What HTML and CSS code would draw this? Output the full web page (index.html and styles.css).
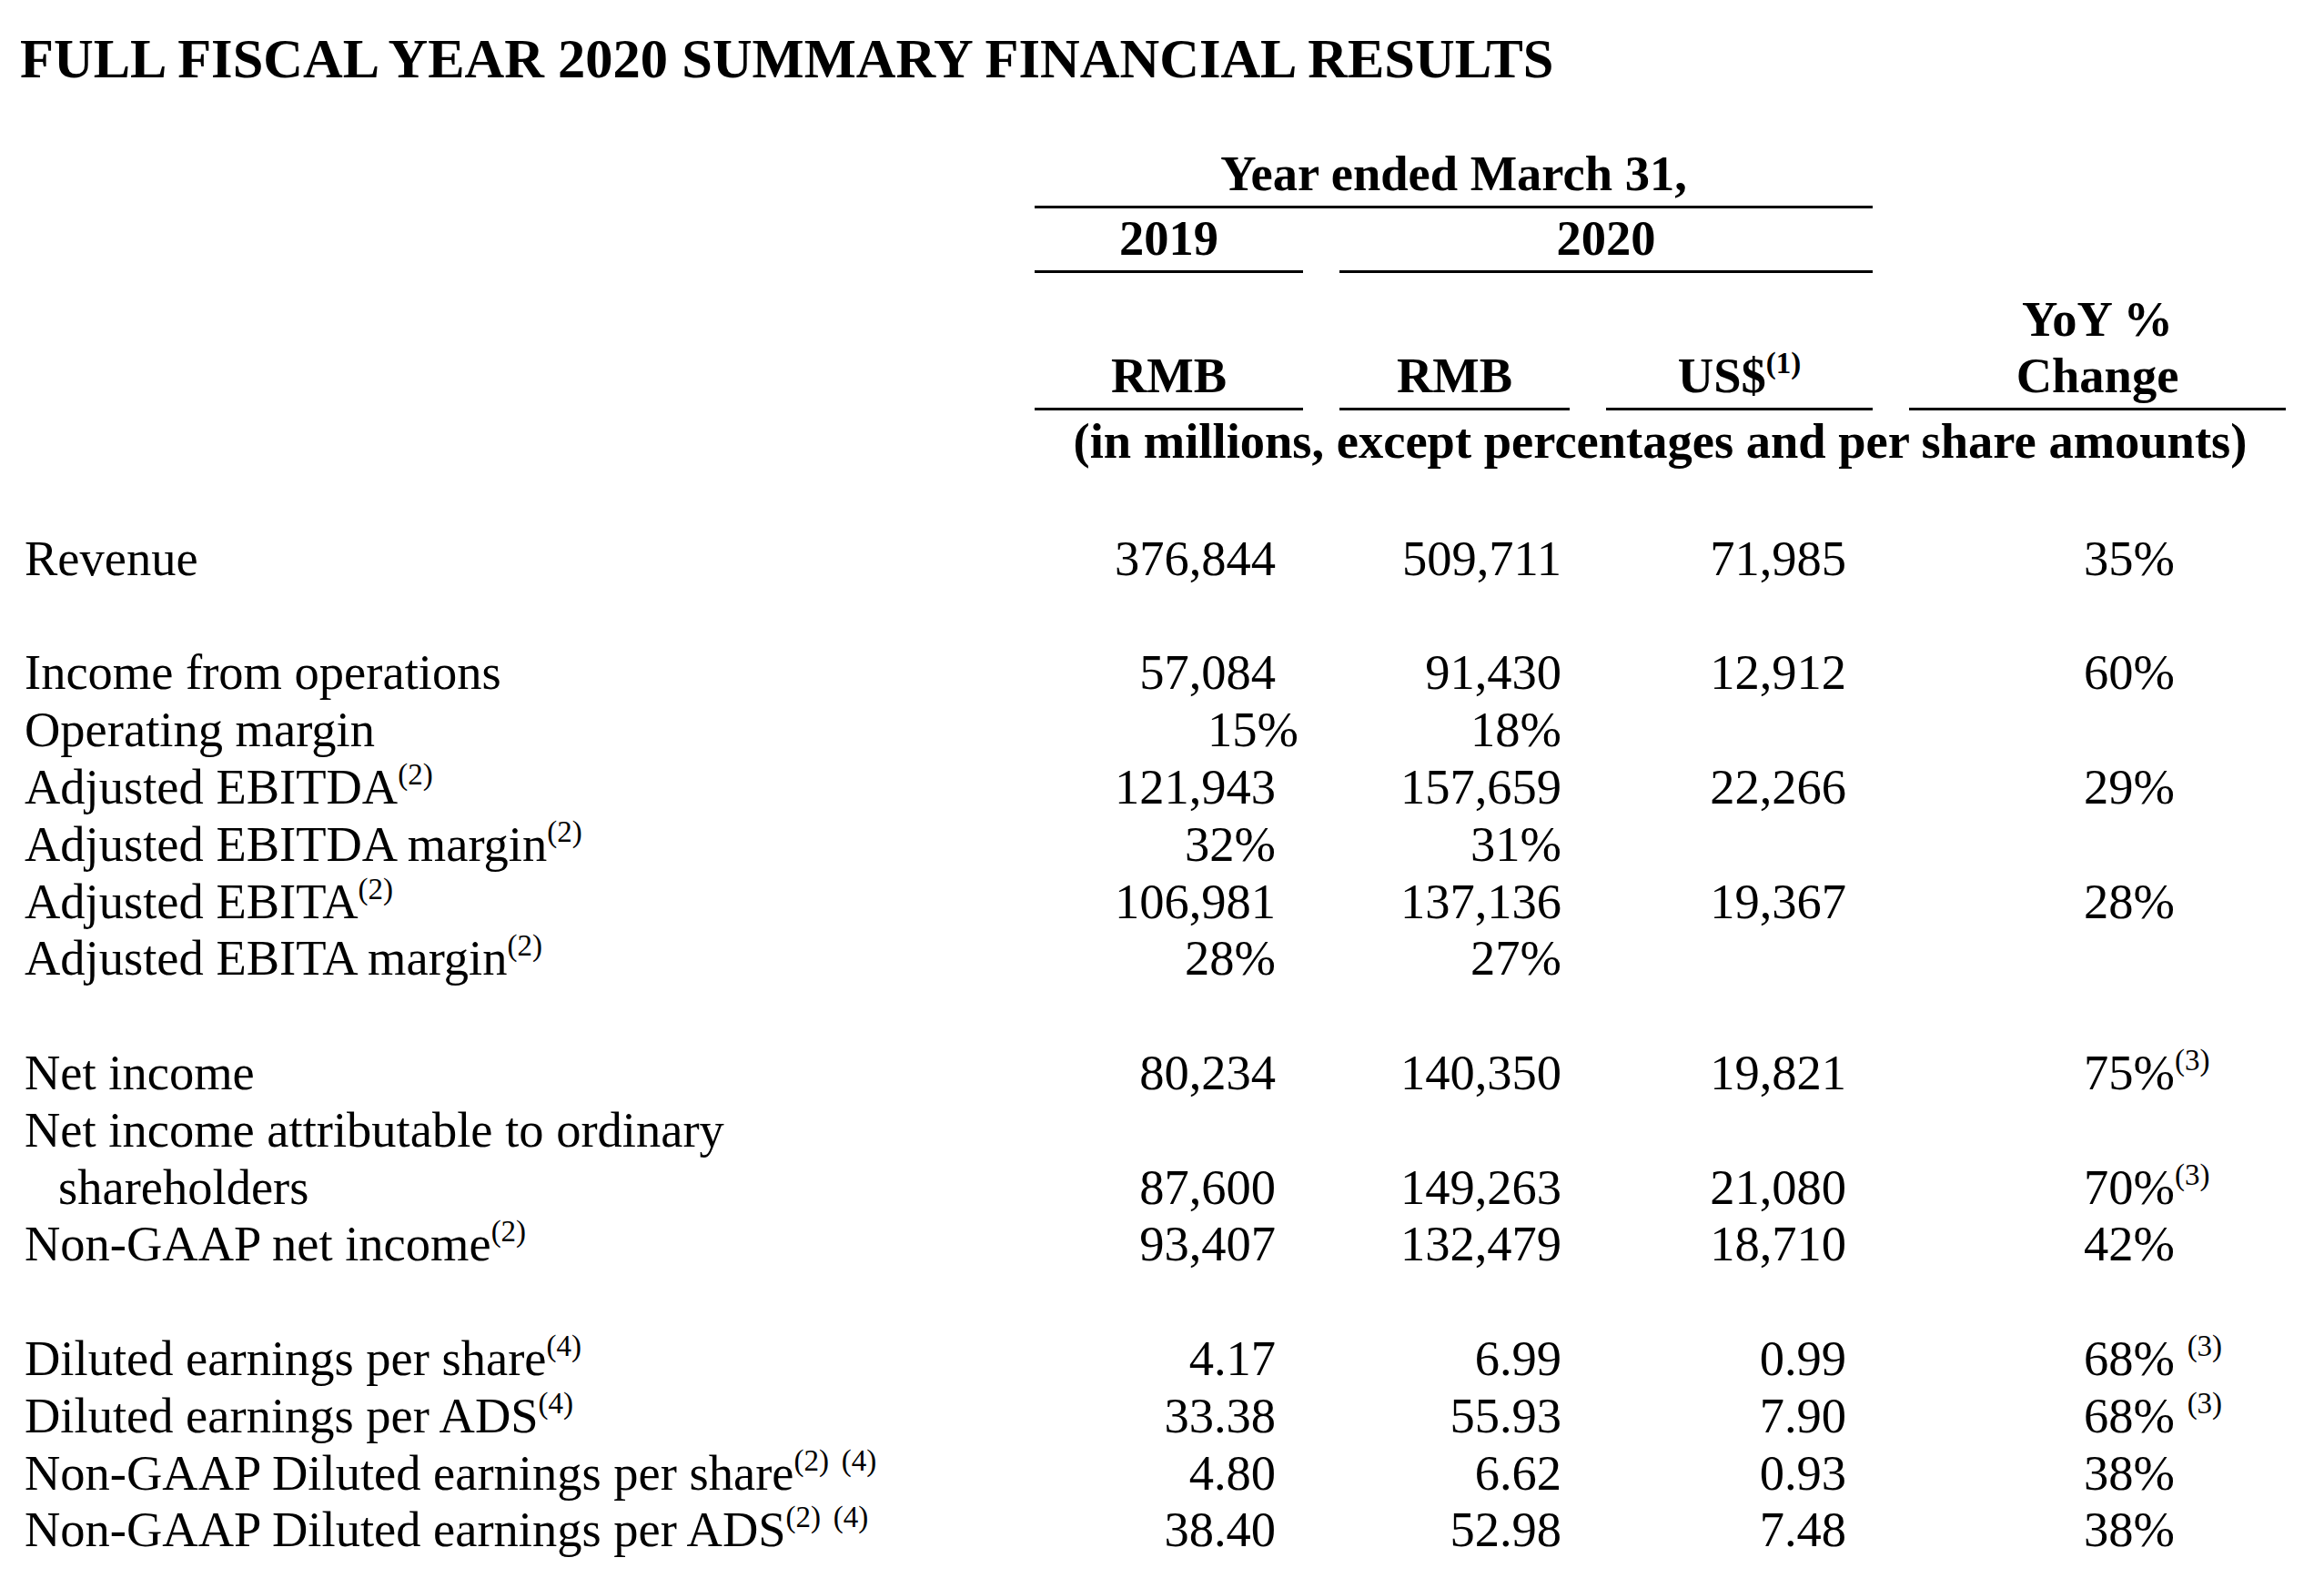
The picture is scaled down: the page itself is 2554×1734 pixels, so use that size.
FILE: index.html
```html
<!DOCTYPE html>
<html lang="en">
<head>
<meta charset="utf-8">
<title>Full Fiscal Year 2020 Summary Financial Results</title>
<link rel="stylesheet" href="styles.css">
</head>
<body>
<main class="page">
  <h1 class="title">FULL FISCAL YEAR 2020 SUMMARY FINANCIAL RESULTS</h1>

  <div class="table">
    <div class="row head head-a">
      <div class="lab"></div>
      <div class="hc span-2-5 rule">Year ended March 31,</div>
    </div>
    <div class="row head head-b">
      <div class="lab"></div>
      <div class="hc rule">2019</div>
      <div class="hc span-3-5 rule">2020</div>
    </div>
    <div class="row head head-c">
      <div class="lab"></div>
      <div class="hc rule">RMB</div>
      <div class="hc rule">RMB</div>
      <div class="hc rule">US$<span class="sup">(1)</span></div>
      <div class="hc rule">YoY %<br>Change</div>
    </div>
    <div class="row head head-d">
      <div class="lab"></div>
      <div class="hc span-2-6">(in millions, except percentages and per share amounts)</div>
    </div>

    <div class="row blank first"></div>

    <div class="row">
      <div class="lab">Revenue</div>
      <div class="c1">376,844</div><div class="c2">509,711</div><div class="c3">71,985</div>
      <div class="c4"><span class="v">35%</span><span class="n"></span></div>
    </div>

    <div class="row blank"></div>

    <div class="row">
      <div class="lab">Income from operations</div>
      <div class="c1">57,084</div><div class="c2">91,430</div><div class="c3">12,912</div>
      <div class="c4"><span class="v">60%</span><span class="n"></span></div>
    </div>
    <div class="row">
      <div class="lab">Operating margin</div>
      <div class="c1 shift">15%</div><div class="c2">18%</div><div class="c3"></div>
      <div class="c4"></div>
    </div>
    <div class="row">
      <div class="lab">Adjusted EBITDA<span class="sup">(2)</span></div>
      <div class="c1">121,943</div><div class="c2">157,659</div><div class="c3">22,266</div>
      <div class="c4"><span class="v">29%</span><span class="n"></span></div>
    </div>
    <div class="row">
      <div class="lab">Adjusted EBITDA margin<span class="sup">(2)</span></div>
      <div class="c1">32%</div><div class="c2">31%</div><div class="c3"></div>
      <div class="c4"></div>
    </div>
    <div class="row">
      <div class="lab">Adjusted EBITA<span class="sup">(2)</span></div>
      <div class="c1">106,981</div><div class="c2">137,136</div><div class="c3">19,367</div>
      <div class="c4"><span class="v">28%</span><span class="n"></span></div>
    </div>
    <div class="row">
      <div class="lab">Adjusted EBITA margin<span class="sup">(2)</span></div>
      <div class="c1">28%</div><div class="c2">27%</div><div class="c3"></div>
      <div class="c4"></div>
    </div>

    <div class="row blank"></div>

    <div class="row">
      <div class="lab">Net income</div>
      <div class="c1">80,234</div><div class="c2">140,350</div><div class="c3">19,821</div>
      <div class="c4"><span class="v">75%</span><span class="n"><span class="sup">(3)</span></span></div>
    </div>
    <div class="row two">
      <div class="lab hang">Net income attributable to ordinary<br>shareholders</div>
      <div class="c1">87,600</div><div class="c2">149,263</div><div class="c3">21,080</div>
      <div class="c4"><span class="v">70%</span><span class="n"><span class="sup">(3)</span></span></div>
    </div>
    <div class="row">
      <div class="lab">Non-GAAP net income<span class="sup">(2)</span></div>
      <div class="c1">93,407</div><div class="c2">132,479</div><div class="c3">18,710</div>
      <div class="c4"><span class="v">42%</span><span class="n"></span></div>
    </div>

    <div class="row blank"></div>

    <div class="row">
      <div class="lab">Diluted earnings per share<span class="sup">(4)</span></div>
      <div class="c1">4.17</div><div class="c2">6.99</div><div class="c3">0.99</div>
      <div class="c4"><span class="v">68%</span><span class="n">&nbsp;<span class="sup">(3)</span></span></div>
    </div>
    <div class="row">
      <div class="lab">Diluted earnings per ADS<span class="sup">(4)</span></div>
      <div class="c1">33.38</div><div class="c2">55.93</div><div class="c3">7.90</div>
      <div class="c4"><span class="v">68%</span><span class="n">&nbsp;<span class="sup">(3)</span></span></div>
    </div>
    <div class="row">
      <div class="lab">Non-GAAP Diluted earnings per share<span class="sup">(2)</span> <span class="sup">(4)</span></div>
      <div class="c1">4.80</div><div class="c2">6.62</div><div class="c3">0.93</div>
      <div class="c4"><span class="v">38%</span><span class="n"></span></div>
    </div>
    <div class="row">
      <div class="lab">Non-GAAP Diluted earnings per ADS<span class="sup">(2)</span> <span class="sup">(4)</span></div>
      <div class="c1">38.40</div><div class="c2">52.98</div><div class="c3">7.48</div>
      <div class="c4"><span class="v">38%</span><span class="n"></span></div>
    </div>
  </div>
</main>
</body>
</html>
```

FILE: styles.css
```css
html, body {
  margin: 0;
  padding: 0;
  background: #ffffff;
}

body {
  font-family: "Liberation Serif", "Times New Roman", serif;
  color: #000000;
}

.page {
  padding: 31px 0 0 0;
}

.title {
  margin: 0;
  padding-left: 22px;
  font-size: 60.5px;
  font-weight: bold;
  line-height: 67px;
}

.table {
  margin-top: 60px;
  padding-left: 27px;
  font-size: 54.5px;
  line-height: 62.8px;
}

.row {
  display: grid;
  grid-template-columns: 1070px 295px 253px 293px 414px;
  column-gap: 40px;
}

.row.blank {
  height: 62.8px;
}

.row.blank.first {
  height: 65.8px;
}

.head {
  font-weight: bold;
  align-items: end;
}

.hc {
  text-align: center;
  padding: 2px 0 3px;
}

.rule {
  border-bottom: 3px solid #000000;
}

.span-2-5 { grid-column: 2 / 5; }
.span-3-5 { grid-column: 3 / 5; }
.span-2-6 { grid-column: 2 / 6; padding: 3px 0 0; }

.head-c {
  margin-top: 18px;
}

.lab {
  white-space: nowrap;
}

.lab.hang {
  padding-left: 37px;
  text-indent: -37px;
}

.two {
  align-items: end;
}

.c1, .c2, .c3 {
  text-align: right;
  white-space: nowrap;
}

.c1 { padding-right: 30px; }
.c1.shift { padding-right: 5px; }
.c2 { padding-right: 9px; }
.c3 { padding-right: 29px; }

.c4 {
  display: grid;
  grid-template-columns: 1fr 122px;
  white-space: nowrap;
}

.c4 .v {
  text-align: right;
}

.c4 .n {
  text-align: left;
}

.sup {
  font-size: 33px;
  line-height: 0;
  vertical-align: 21px;
}
```
